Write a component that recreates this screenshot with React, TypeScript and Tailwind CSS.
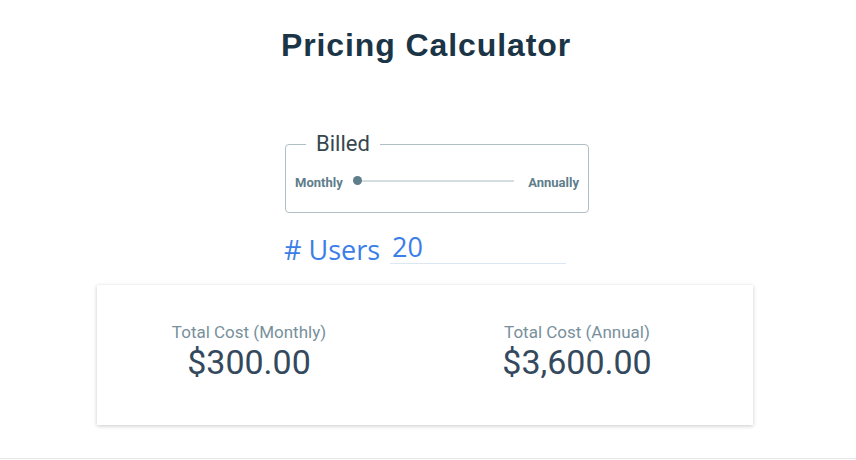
import React from "react";

const roboto = { fontFamily: "Roboto, 'Noto Sans', sans-serif" };

export default function App() {
  return (
    <div className="w-[856px] h-[460px] bg-white flex flex-col overflow-hidden">
      <h1
        className="text-center text-[32px] leading-[40px] font-bold text-[#1b3547] pt-[25px] tracking-[0.9px] pr-[4px]"
        style={{ fontFamily: "'Liberation Sans', Arial, sans-serif" }}
      >
        Pricing Calculator
      </h1>

      {/* Billed toggle */}
      <fieldset
        className="ml-[285px] mt-[66px] w-[304px] h-[82px] border border-[#b0bec5] rounded-[4px] px-[9px] pb-[12px]"
        style={roboto}
      >
        <legend className="ml-[11px] px-[10px] text-[22px] leading-[26px] text-[#37474f]">
          Billed
        </legend>
        <div className="flex items-center gap-[14px] mt-[16px]">
          <span className="text-[13px] font-bold text-[#607d8b]">Monthly</span>
          <div className="relative flex-1 h-[2px] bg-[#d5dde1] -translate-y-[2px]">
            <span className="absolute left-[-4px] top-[-4px] w-[9px] h-[9px] rounded-full bg-[#607d8b]" />
          </div>
          <span className="text-[13px] font-bold text-[#607d8b]">Annually</span>
        </div>
      </fieldset>

      {/* Users input */}
      <div
        className="ml-[284px] mt-[20px] flex items-end gap-[10px] text-[#3b7ee8]"
        style={{ fontFamily: "'Open Sans', sans-serif" }}
      >
        <span className="text-[27px] leading-[32px] mb-[-2px]">#&nbsp;Users</span>
        <input
          defaultValue="20"
          className="w-[176px] text-[27px] leading-[28px] pl-[2px] pb-[2px] border-b border-[#dce7f4] outline-none text-[#3b7ee8] bg-transparent"
        />
      </div>

      {/* Totals card */}
      <div
        className="ml-[97px] mt-[21px] w-[656px] h-[140px] bg-white shadow-[0_1px_4px_rgba(0,0,0,0.22)] grid grid-cols-[304px_352px] items-center"
        style={roboto}
      >
        <div className="flex flex-col items-center pb-[6px]">
          <span className="text-[17px] leading-[20px] text-[#78909c]">Total Cost (Monthly)</span>
          <span className="text-[34px] leading-[40px] text-[#34495e]">$300.00</span>
        </div>
        <div className="flex flex-col items-center pb-[6px]">
          <span className="text-[17px] leading-[20px] text-[#78909c]">Total Cost (Annual)</span>
          <span className="text-[34px] leading-[40px] text-[#34495e]">$3,600.00</span>
        </div>
      </div>

      <div className="mt-auto border-t border-[#e8e8e8] h-[2px]" />
    </div>
  );
}
